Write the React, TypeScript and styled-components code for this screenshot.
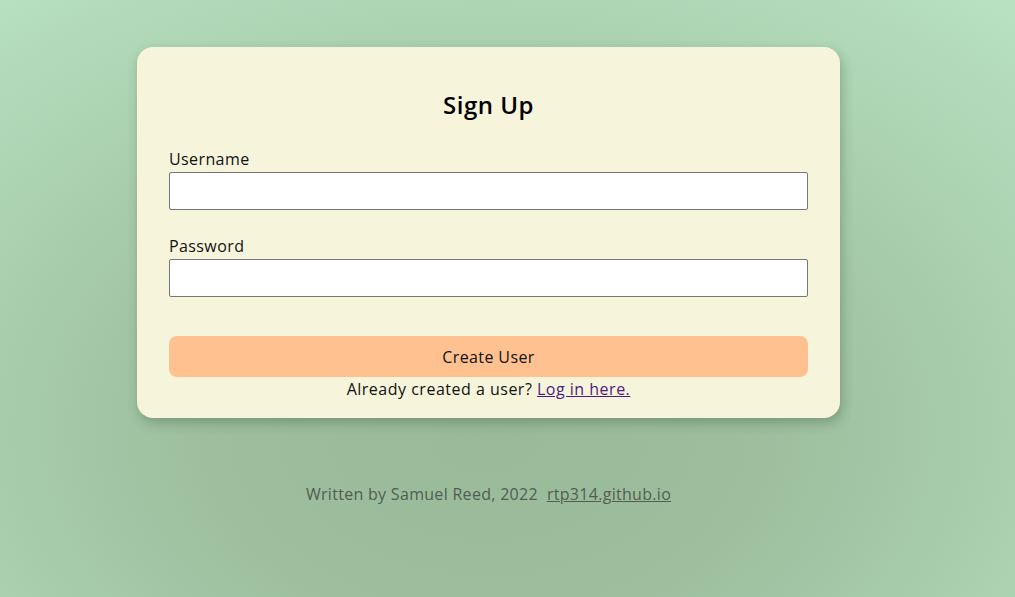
import React from 'react'
import styled, { createGlobalStyle } from 'styled-components'

const GlobalStyle = createGlobalStyle`
  html, body {
    margin: 0;
    padding: 0;
    height: 100%;
  }
  body {
    font-family: 'Open Sans', 'Liberation Sans', sans-serif;
    color: #111;
    background: radial-gradient(ellipse 80% 95% at 48% 72%, #99ba99 0%, #9dbf9e 35%, #b8e2c2 100%);
  }
  #root {
    min-height: 100%;
  }
`

const Page = styled.main`
  width: calc(100% - 38px);
  min-height: 597px;
  display: flex;
  flex-direction: column;
  align-items: center;
  padding-top: 47px;
  box-sizing: border-box;
`

const Card = styled.section`
  width: 703px;
  box-sizing: border-box;
  padding: 40px 32px 17px;
  background: #f7f4dc;
  border-radius: 16px;
  box-shadow: 2px 5px 12px rgba(40, 70, 40, 0.3);
  display: flex;
  flex-direction: column;
`

const Title = styled.h1`
  margin: 0 0 24px;
  font-size: 24px;
  font-weight: 600;
  letter-spacing: 0.5px;
  line-height: 36px;
  text-align: center;
  color: #000;
`

const Field = styled.label<{ spacing?: number }>`
  display: flex;
  flex-direction: column;
  margin-bottom: ${({ spacing }) => spacing ?? 24}px;
`

const LabelText = styled.span`
  font-size: 16px;
  letter-spacing: 0.4px;
  line-height: 24px;
  margin-bottom: 1px;
  color: #111;
`

const Input = styled.input`
  height: 38px;
  box-sizing: border-box;
  border: 1px solid #767676;
  border-radius: 2px;
  background: #fff;
  padding: 0 8px;
  font: inherit;
  outline: none;
`

const Button = styled.button`
  height: 41px;
  border: none;
  border-radius: 8px;
  background: #ffc190;
  font-family: inherit;
  font-size: 16px;
  letter-spacing: 0.4px;
  color: #111;
  cursor: pointer;
`

const Prompt = styled.p`
  margin: 0;
  font-size: 16px;
  letter-spacing: 0.5px;
  line-height: 24px;
  text-align: center;
  color: #111;
`

const Link = styled.a<{ muted?: boolean }>`
  color: ${({ muted }) => (muted ? '#525c52' : '#4d1a7f')};
  text-decoration: underline;
`

const Footer = styled.footer`
  margin-top: 64px;
  font-size: 16px;
  letter-spacing: 0.3px;
  line-height: 24px;
  color: #525c52;
  white-space: pre;
`

export default function App() {
  return (
    <>
      <GlobalStyle />
      <Page>
        <Card>
          <Title>Sign Up</Title>
          <Field>
            <LabelText>Username</LabelText>
            <Input type="text" />
          </Field>
          <Field spacing={39}>
            <LabelText>Password</LabelText>
            <Input type="password" />
          </Field>
          <Button type="button">Create User</Button>
          <Prompt>
            Already created a user? <Link href="#login">Log in here.</Link>
          </Prompt>
        </Card>
        <Footer>
          Written by Samuel Reed, 2022{'  '}
          <Link muted href="#home">rtp314.github.io</Link>
        </Footer>
      </Page>
    </>
  )
}
